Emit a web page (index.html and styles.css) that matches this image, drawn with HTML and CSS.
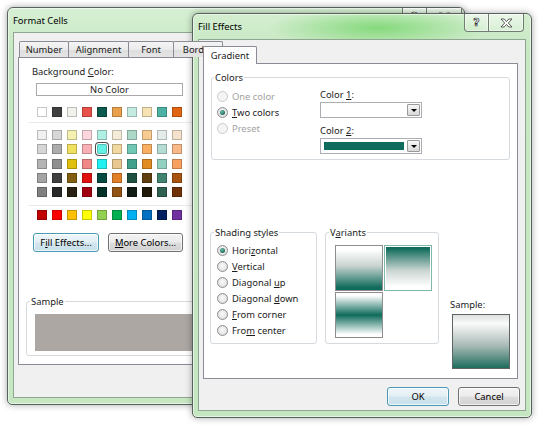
FILE: index.html
```html
<!DOCTYPE html>
<html><head><meta charset="utf-8"><title>Format Cells</title><link rel="stylesheet" href="styles.css"></head>
<body>
<div class="win fc">
  <div class="titlebar">
    <span class="title">Format Cells</span>
    <div class="caps"><span class="cap help">?</span><span class="cap close"><svg width="13" height="10" viewBox="0 0 13 10"><path d="M1,1 h3.2 l2.3,2.6 l2.3,-2.6 h3.2 l-3.7,4 l3.7,4 h-3.2 l-2.3,-2.6 l-2.3,2.6 h-3.2 l3.7,-4 z" fill="#fff" stroke="#3a3a3a" stroke-width="0.8"/></svg></span></div>
  </div>
  <div class="client">
    <div class="tabs">
      <span class="tab t-num">Number</span><span class="tab t-ali">Alignment</span><span class="tab t-font">Font</span><span class="tab t-bor">Border</span>
    </div>
    <div class="panel fc-panel">
      <div class="bg-label">Background <u>C</u>olor:</div>
      <div class="nocolor">No Color</div>
      <div class="swrow first">
        <span class="sw" style="background:#ffffff"></span><span class="sw" style="background:#404040"></span><span class="sw" style="background:#f2f2ec"></span><span class="sw" style="background:#e8504a"></span><span class="sw" style="background:#0c5a4e"></span><span class="sw" style="background:#e8a04c"></span><span class="sw" style="background:#c6ebe0"></span><span class="sw" style="background:#f7e2b4"></span><span class="sw" style="background:#4cb0a2"></span><span class="sw" style="background:#e06412"></span>
      </div>
      <div class="sep"></div>
      <div class="swrow grid5">
        <span class="sw" style="background:#f0f0f0"></span><span class="sw" style="background:#d6d6d6"></span><span class="sw" style="background:#f5f0b0"></span><span class="sw" style="background:#fcd6dc"></span><span class="sw" style="background:#b0f0e4"></span><span class="sw" style="background:#f4ecd8"></span><span class="sw" style="background:#acd8c8"></span><span class="sw" style="background:#f8cc90"></span><span class="sw" style="background:#e4ecea"></span><span class="sw" style="background:#f4e2cc"></span>
        <span class="sw" style="background:#d6d6d6"></span><span class="sw" style="background:#acacac"></span><span class="sw" style="background:#f0e060"></span><span class="sw" style="background:#f8b0b4"></span><span class="sw sel" style="background:#64f0e4"></span><span class="sw" style="background:#f0d8a0"></span><span class="sw" style="background:#70c8b4"></span><span class="sw" style="background:#f8b060"></span><span class="sw" style="background:#b4dcd4"></span><span class="sw" style="background:#f8b888"></span>
        <span class="sw" style="background:#b4b4b4"></span><span class="sw" style="background:#909090"></span><span class="sw" style="background:#e0c010"></span><span class="sw" style="background:#f08888"></span><span class="sw" style="background:#20f0f0"></span><span class="sw" style="background:#e8c890"></span><span class="sw" style="background:#40a08c"></span><span class="sw" style="background:#e08c20"></span><span class="sw" style="background:#94d0c0"></span><span class="sw" style="background:#f8a060"></span>
        <span class="sw" style="background:#a4a4a4"></span><span class="sw" style="background:#404040"></span><span class="sw" style="background:#806010"></span><span class="sw" style="background:#e01010"></span><span class="sw" style="background:#044a40"></span><span class="sw" style="background:#e08028"></span><span class="sw" style="background:#205040"></span><span class="sw" style="background:#604010"></span><span class="sw" style="background:#408470"></span><span class="sw" style="background:#a85410"></span>
        <span class="sw" style="background:#808080"></span><span class="sw" style="background:#282828"></span><span class="sw" style="background:#282010"></span><span class="sw" style="background:#a00010"></span><span class="sw" style="background:#003028"></span><span class="sw" style="background:#905414"></span><span class="sw" style="background:#101c14"></span><span class="sw" style="background:#201808"></span><span class="sw" style="background:#306050"></span><span class="sw" style="background:#703008"></span>
      </div>
      <div class="sep sep2"></div>
      <div class="swrow std">
        <span class="sw" style="background:#c00000"></span><span class="sw" style="background:#ff0000"></span><span class="sw" style="background:#ffc000"></span><span class="sw" style="background:#ffff00"></span><span class="sw" style="background:#92d050"></span><span class="sw" style="background:#00b050"></span><span class="sw" style="background:#00b0f0"></span><span class="sw" style="background:#0070c0"></span><span class="sw" style="background:#002060"></span><span class="sw" style="background:#7030a0"></span>
      </div>
      <div class="btnrow">
        <button class="btn default b-fill">F<u>i</u>ll Effects...</button>
        <button class="btn b-more"><u>M</u>ore Colors...</button>
      </div>
      <fieldset class="grp fc-sample">
        <legend>Sample</legend>
        <div class="sample-gray"></div>
      </fieldset>
    </div>
  </div>
</div>

<div class="win fe">
  <div class="titlebar">
    <span class="title">Fill Effects</span>
    <div class="caps"><span class="cap help">?</span><span class="cap close"><svg width="13" height="10" viewBox="0 0 13 10"><path d="M1,1 h3.2 l2.3,2.6 l2.3,-2.6 h3.2 l-3.7,4 l3.7,4 h-3.2 l-2.3,-2.6 l-2.3,2.6 h-3.2 l3.7,-4 z" fill="#fff" stroke="#3a3a3a" stroke-width="0.8"/></svg></span></div>
  </div>
  <div class="client">
    <div class="tabs">
      <span class="tab sel">Gradient</span>
    </div>
    <div class="panel fe-panel">
      <fieldset class="grp colors">
        <legend>Colors</legend>
        <div class="colors-body">
          <div class="radios">
            <div class="radio dis"><span class="rb"></span>One color</div>
            <div class="radio"><span class="rb on"></span><span><u>T</u>wo colors</span></div>
            <div class="radio dis"><span class="rb"></span>Preset</div>
          </div>
          <div class="combos">
            <div class="clabel">Color <u>1</u>:</div>
            <div class="combo"><span class="cval"></span><span class="cbtn"></span></div>
            <div class="clabel second">Color <u>2</u>:</div>
            <div class="combo"><span class="cval teal"></span><span class="cbtn"></span></div>
          </div>
        </div>
      </fieldset>
      <div class="lower">
        <fieldset class="grp shading">
          <legend>Shading styles</legend>
          <div class="radios">
            <div class="radio"><span class="rb on"></span><span>Hori<u>z</u>ontal</span></div>
            <div class="radio"><span class="rb"></span><span><u>V</u>ertical</span></div>
            <div class="radio"><span class="rb"></span><span>Diagonal <u>u</u>p</span></div>
            <div class="radio"><span class="rb"></span><span>Diagonal <u>d</u>own</span></div>
            <div class="radio"><span class="rb"></span><span><u>F</u>rom corner</span></div>
            <div class="radio"><span class="rb"></span><span>Fro<u>m</u> center</span></div>
          </div>
        </fieldset>
        <fieldset class="grp variants">
          <legend>V<u>a</u>riants</legend>
          <div class="tiles">
            <span class="tile v1"></span>
            <span class="tile v2 sel"></span>
            <span class="tile v3"></span>
          </div>
        </fieldset>
        <div class="samplecol">
          <div>Sample:</div>
          <div class="sample-grad"></div>
        </div>
      </div>
    </div>
    <div class="dlgbtns">
      <button class="btn default b-ok">OK</button>
      <button class="btn b-cancel">Cancel</button>
    </div>
  </div>
</div>
</body></html>
```
FILE: styles.css
```css
* { box-sizing: border-box; }
html, body { margin: 0; }
body {
  width: 540px; height: 427px; position: relative; overflow: hidden;
  background: #ffffff;
  font-family: "Noto Sans", "Open Sans", sans-serif;
  font-size: 9.4px; line-height: 13px; color: #1b1b1b;
}
u { text-decoration: underline; text-underline-offset: 1px; text-decoration-thickness: 1px; }

/* windows */
.win {
  position: absolute;
  display: flex; flex-direction: column;
  border: 1px solid #56625a;
  border-radius: 6px 6px 5px 5px;
  padding: 0 5px 6px 5px;
  box-shadow: inset 0 0 0 1px rgba(255,255,255,0.55), 0 0 7px rgba(0,0,0,0.35);
}
.fc {
  left: 7px; top: 7px; width: 458px; height: 398px;
  background: linear-gradient(#d6f0d3, #c8e8c4 40px, #c6e7c2);
}
.fe {
  left: 192px; top: 13px; width: 340px; height: 405px;
  background:
    radial-gradient(ellipse 110px 20px at 185px 14px, rgba(120,214,110,0.85), rgba(120,214,110,0) 100%),
    linear-gradient(#d3eecf, #c6e7c2 40px, #c4e6c0);
}
.titlebar { display: flex; align-items: flex-start; flex: none; }
.fc .titlebar { height: 24px; }
.fe .titlebar { height: 25px; }
.title { align-self: center; color: #000; }
.caps { margin-left: auto; display: flex; }
.fc .caps { margin-right: -3px; }
.fe .caps { margin-right: 2px; }
.cap {
  height: 18px; display: flex; align-items: center; justify-content: center;
  border: 1px solid #6f7d70; border-top: none;
  background: linear-gradient(rgba(255,255,255,0.55), rgba(255,255,255,0.2));
  box-shadow: inset 0 0 0 1px rgba(255,255,255,0.5);
}
.cap.help {
  width: 25px; border-radius: 0 0 0 4px;
  font-family: "DejaVu Sans", sans-serif; font-weight: bold; font-size: 11px;
  color: #fff; -webkit-text-stroke: 0.7px #333;
}
.cap.close { width: 35px; border-left: none; border-radius: 0 0 4px 0; }

/* client */
.client {
  flex: 1; display: flex; flex-direction: column;
  background: #f0f0f0; border: 1px solid #8fa690;
}
.fc .client { padding: 8px 6px 0 4px; }
.fe .client { padding: 6px 6px 0 4px; }

.tabs { display: flex; flex: none; position: relative; z-index: 1; }
.fc .tabs { margin-left: 1px; }
.tab {
  height: 16px; display: flex; align-items: center; justify-content: center;
  border: 1px solid #898c95; border-bottom: none; margin-right: -1px;
  background: linear-gradient(#f4f4f4, #ebebeb 50%, #dedede 51%, #e4e4e4);
  border-radius: 2px 2px 0 0;
}
.t-num { width: 50px; }
.t-ali { width: 61px; }
.t-font { width: 46px; }
.t-bor { width: 50px; }
.tab.sel {
  width: 54px; height: 18px; background: #fff; margin-bottom: -1px;
}

.panel { background: #fff; border: 1px solid #898c95; flex: none; }
.fc-panel { height: 308px; padding: 7px 0 0 13px; display: flex; flex-direction: column; }
.fe-panel { width: 315px; height: 316px; padding: 7px 7px 0 6px; display: flex; flex-direction: column; }

/* format cells content */
.nocolor {
  margin: 5px 0 0 4px; width: 147px; height: 13px;
  border: 1px solid #a9a9a9; background: #fff;
  display: flex; align-items: center; justify-content: center;
  color: #222;
}
.swrow {
  display: grid; grid-template-columns: repeat(10, 10px); column-gap: 5px;
  margin-left: 5px;
}
.swrow.first { margin-top: 11px; }
.swrow.grid5 { margin-top: 7px; row-gap: 4.3px; }
.swrow.std { margin-top: 4px; }
.sw { width: 10px; height: 10px; box-shadow: inset 0 0 0 1px rgba(0,0,0,0.22); }
.sw.sel { border-radius: 2px; box-shadow: inset 0 0 0 1px rgba(0,0,0,0.2), 0 0 0 1px #fff, 0 0 0 2px #4a4a4a; }
.sep { margin: 5px 0 0 -4px; width: 400px; height: 1px; background: #ebebeb; }
.sep2 { margin-top: 8px; }
.btnrow { display: flex; gap: 9px; margin: 13px 0 0 1px; }
.btn {
  font: inherit; color: #000; height: 19px; padding: 0;
  border: 1px solid #707070; border-radius: 3px;
  background: linear-gradient(#f3f3f3, #ececec 48%, #dddddd 52%, #d1d1d1);
  box-shadow: inset 0 0 0 1px rgba(255,255,255,0.7);
  display: flex; align-items: center; justify-content: center;
}
.btn.default {
  border-color: #4a9ab5;
  background: linear-gradient(#eef6f9, #e3eff4 48%, #d3e6ee 52%, #c9e0ea);
}
.b-fill { width: 66px; }
.b-more { width: 75px; }
.b-ok, .b-cancel { width: 62px; }

.grp {
  margin: 0; padding: 0; min-width: 0;
  border: 1px solid #d5dadf; border-radius: 3px;
}
.grp legend { padding: 0 1px; margin-left: 3px; line-height: 13px; }
.grp.fc-sample { margin: 43px 0 0 -6px; width: 430px; }
.sample-gray { height: 37px; margin: 6px 0 4px 8px; background: #aca7a3; }

/* fill effects content */
.grp.colors { width: 299px; margin-left: 1px; }
.grp.colors legend { margin-left: 2px; }
.colors-body { display: grid; grid-template-columns: 108px 1fr; padding: 4px 0 5px 0; }
.radios { display: flex; flex-direction: column; padding-left: 5px; }
.radio { display: flex; align-items: center; height: 16px; gap: 4px; color: #1b1b1b; }
.rb {
  flex: none; width: 11px; height: 11px; border-radius: 50%;
  border: 1px solid #8b8d8f;
  background: radial-gradient(circle at 50% 45%, #fbfbfb, #e6e6e6 60%, #cfcfcf);
  display: flex; align-items: center; justify-content: center;
}
.rb.on::after {
  content: ""; width: 5px; height: 5px; border-radius: 50%;
  background: radial-gradient(circle at 40% 35%, #66c0aa, #1e6456 75%);
}
.radio.dis { color: #a3a3a3; }
.radio.dis .rb { border-color: #cacaca; background: #f4f4f4; }
.combos { display: flex; flex-direction: column; }
.clabel.second { margin-top: 6px; }
.combo {
  margin-top: 1px; width: 102px; height: 16px;
  border: 1px solid #abadb3; background: #fff; display: flex; padding: 1px;
}
.cval { flex: 1; }
.cval.teal { background: #0f6b5b; margin: 2px 3px 2px 2px; }
.cbtn {
  width: 13px; border: 1px solid #9a9a9a; border-radius: 1px;
  background: linear-gradient(#f7f7f7, #e8e8e8 50%, #d8d8d8);
  display: flex; align-items: center; justify-content: center;
}
.cbtn::after {
  content: ""; border-left: 3px solid transparent; border-right: 3px solid transparent;
  border-top: 3px solid #000;
}

.lower { display: flex; align-items: flex-start; margin-top: 66px; }
.grp.shading { width: 107px; }
.shading .radios { padding: 3px 0 5px 6px; }
.grp.variants { width: 114px; margin-left: 8px; }
.tiles {
  display: grid; grid-template-columns: 48px 48px; grid-auto-rows: 46px; gap: 1px;
  padding: 6px 0 5px 9px;
}
.tile { border: 1px solid #8d8d8d; }
.v1 { background: linear-gradient(#ffffff 8%, #c9d4d1 45%, #0f6b5b 95%); }
.v2 {
  border-color: #7fb8ab; padding: 1px; background-clip: content-box;
  background-image: linear-gradient(#0f6b5b 5%, #c9d4d1 55%, #ffffff 92%);
  box-shadow: inset 0 0 0 1px #fff;
}
.v3 { background: linear-gradient(#ffffff 6%, #0f6b5b 50%, #ffffff 94%); }
.samplecol { margin: 72px 0 0 11px; width: 60px; }
.sample-grad {
  margin: 3px 0 0 2px; width: 58px; height: 55px;
  border: 1px solid #5e6463;
  background: linear-gradient(#dde1e0, #fafafa 16%, #a9bab6 58%, #1e6c5e);
}
.dlgbtns { display: flex; justify-content: flex-end; gap: 9px; margin: 8px -1px 0 0; }
```
